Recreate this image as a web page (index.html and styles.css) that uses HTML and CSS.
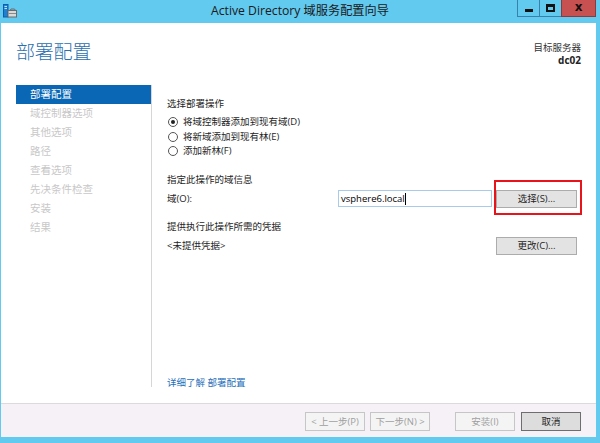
FILE: index.html
```html
<!DOCTYPE html>
<html lang="zh-CN">
<head>
<meta charset="utf-8">
<title>Active Directory 域服务配置向导</title>
<link rel="stylesheet" href="styles.css">
</head>
<body>
<div class="window">
  <div class="titlebar">
    <div class="tb-left">
      <svg class="app-icon" width="14" height="14" viewBox="0 0 14 14">
        <rect x="0.5" y="0.5" width="4.5" height="12.5" fill="#1f7fd0" stroke="#0d5ea8" stroke-width="1"/>
        <rect x="1.5" y="2" width="2.5" height="1" fill="#bfe3ff"/>
        <rect x="1.5" y="4" width="2.5" height="1" fill="#bfe3ff"/>
        <path d="M7 6.5 L8 5 H11.5 L12.5 6.5" fill="none" stroke="#6b6b6b" stroke-width="1"/>
        <rect x="5" y="6.5" width="8.5" height="6.5" fill="#d9d9d9" stroke="#6b6b6b" stroke-width="1"/>
        <rect x="5.5" y="9" width="7.5" height="1" fill="#8a8a8a"/>
      </svg>
    </div>
    <div class="tb-title">Active Directory 域服务配置向导</div>
    <div class="tb-right">
      <div class="wbtn wmin"><span class="glyph-min"></span></div>
      <div class="wbtn wmax"><span class="glyph-max"></span></div>
      <div class="wbtn wclose"><span class="glyph-close">x</span></div>
    </div>
  </div>
  <div class="client">
    <div class="header">
      <div class="page-title">部署配置</div>
      <div class="target">
        <div class="target-label">目标服务器</div>
        <div class="target-name">dc02</div>
      </div>
    </div>
    <div class="body">
      <ul class="nav">
        <li class="nav-item active">部署配置</li>
        <li class="nav-item">域控制器选项</li>
        <li class="nav-item">其他选项</li>
        <li class="nav-item">路径</li>
        <li class="nav-item">查看选项</li>
        <li class="nav-item">先决条件检查</li>
        <li class="nav-item">安装</li>
        <li class="nav-item">结果</li>
      </ul>
      <div class="main">
        <div class="section-title">选择部署操作</div>
        <div class="radios">
          <div class="radio-row"><span class="radio checked"></span><span>将域控制器添加到现有域(D)</span></div>
          <div class="radio-row"><span class="radio"></span><span>将新域添加到现有林(E)</span></div>
          <div class="radio-row"><span class="radio"></span><span>添加新林(F)</span></div>
        </div>
        <div class="section-title sec2">指定此操作的域信息</div>
        <div class="field-row">
          <span class="field-label">域(O):</span>
          <div class="input"><span>vsphere6.local</span><span class="caret"></span></div>
          <div class="btn-wrap">
            <button class="btn">选择(S)...</button>
            <div class="highlight-box"></div>
          </div>
        </div>
        <div class="section-title sec3">提供执行此操作所需的凭据</div>
        <div class="field-row">
          <span class="field-label">&lt;未提供凭据&gt;</span>
          <button class="btn">更改(C)...</button>
        </div>
        <a class="learn-more">详细了解 部署配置</a>
      </div>
    </div>
    <div class="footer">
      <button class="btn fbtn disabled">&lt; 上一步(P)</button>
      <button class="btn fbtn disabled">下一步(N) &gt;</button>
      <button class="btn fbtn disabled install">安装(I)</button>
      <button class="btn fbtn default">取消</button>
    </div>
  </div>
</div>
</body>
</html>
```
FILE: styles.css
```css
* { box-sizing: border-box; }
html, body { margin: 0; padding: 0; }
body {
  font-family: "Open Sans", "Noto Sans CJK SC", sans-serif;
  font-size: 9.5px;
  color: #1e1e1e;
}
.window {
  width: 600px;
  height: 443px;
  background: #62c9ef;
  display: flex;
  flex-direction: column;
}
.titlebar {
  height: 23px;
  display: grid;
  grid-template-columns: 1fr auto 1fr;
  align-items: start;
}
.tb-left { padding: 4px 0 0 3px; display: flex; }
.app-icon { display: block; }
.tb-title {
  font-size: 12.2px;
  line-height: 22px;
  color: #1a1a1a;
}
.tb-right { display: flex; justify-content: flex-end; padding-right: 4px; }
.wbtn {
  height: 17px;
  border: 1px solid #3a80a8;
  border-top: none;
  display: flex;
  align-items: center;
  justify-content: center;
  margin-left: -1px;
}
.wmin { width: 23px; }
.wmax { width: 23px; }
.wclose { width: 35px; background: #c75050; border-color: #8a3a3a; }
.glyph-min { width: 8px; height: 3px; background: #111; margin-top: 4px; }
.glyph-max { width: 9px; height: 8px; border: 2px solid #111; border-top-width: 3px; }
.glyph-close { font: bold 12px/1 "DejaVu Sans", sans-serif; color: #111; margin-top: -2px; }
.client {
  flex: 1;
  margin: 0 4px 6px 1px;
  background: #fff;
  display: flex;
  flex-direction: column;
}
.header {
  height: 62px;
  display: flex;
  justify-content: space-between;
  align-items: flex-start;
  padding: 17px 15px 0 15px;
}
.page-title {
  font-size: 19px;
  line-height: 24px;
  color: #2a6fae;
  font-weight: 300;
  letter-spacing: -0.2px;
}
.target { text-align: right; font-size: 9.5px; line-height: 12px; padding-top: 2px; }
.target-label { color: #333; }
.target-name { font-weight: bold; color: #222; font-size: 10px; }
.body {
  flex: 1;
  display: flex;
}
.nav {
  list-style: none;
  margin: 0 0 16px 15px;
  padding: 0;
  width: 136px;
  border-right: 1px solid #d6d6d6;
  font-size: 10.5px;
}
.nav-item {
  height: 19px;
  line-height: 19px;
  padding-left: 14px;
  color: #c8c8c8;
}
.nav-item.active { background: #0a67b5; color: #fff; }
.main {
  flex: 1;
  display: flex;
  flex-direction: column;
  padding: 9px 19px 11px 15px;
}
.section-title { line-height: 19px; height: 19px; }
.radios { margin-top: 2px; }
.radio-row { display: flex; align-items: center; height: 14.5px; line-height: 14px; }
.radio {
  width: 10px;
  height: 10px;
  border: 1px solid #555;
  border-radius: 50%;
  margin: 0 5px 0 1px;
  display: flex;
  align-items: center;
  justify-content: center;
  background: #fff;
  flex: none;
}
.radio.checked::after {
  content: "";
  width: 4px;
  height: 4px;
  border-radius: 50%;
  background: #222;
}
.sec2 { margin-top: 11px; }
.sec3 { margin-top: 8px; }
.field-row {
  display: flex;
  align-items: center;
  height: 20px;
  line-height: 14px;
}
.field-label { width: 171px; }
.input {
  width: 154px;
  height: 17px;
  border: 1px solid #a8cbea;
  padding-left: 2px;
  display: flex;
  align-items: center;
  color: #000;
}
.caret { width: 1px; height: 12px; background: #000; }
.btn-wrap { position: relative; margin-left: auto; }
.btn {
  font: inherit;
  color: #1e1e1e;
  width: 81px;
  height: 18px;
  padding: 0;
  background: #e3e3e3;
  border: 1px solid #acacac;
  line-height: 16px;
  margin-left: auto;
  white-space: nowrap;
}
.btn-wrap .btn { margin-left: 0; display: block; }
.highlight-box {
  position: absolute;
  left: -2px;
  top: -10px;
  right: -5px;
  bottom: -7px;
  border: 2px solid #e8141c;
}
.learn-more {
  margin-top: auto;
  line-height: 19px;
  color: #1e6fba;
}
.footer {
  height: 34px;
  border-top: 1px solid #dddadd;
  background: #f6f1f6;
  display: flex;
  align-items: flex-start;
  justify-content: flex-end;
  padding: 8px 15px 0 0;
}
.fbtn { width: 60px; height: 19px; margin-left: 5px; }
.fbtn.install { margin-left: 25px; }
.fbtn.disabled { background: #f4f4f4; border-color: #c6c6c6; color: #9f9f9f; }
.fbtn.default { background: #dddddd; border-color: #6e6e6e; margin-left: 6px; }
```
